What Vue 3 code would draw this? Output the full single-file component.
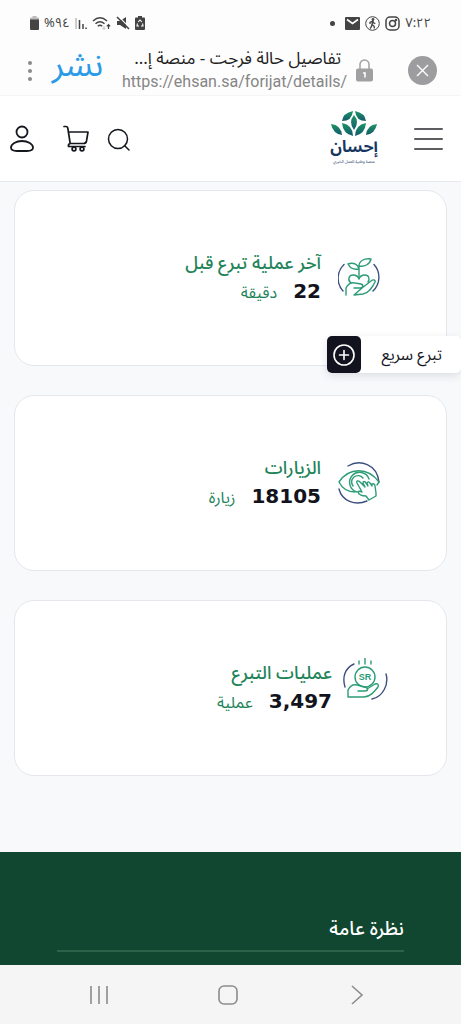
<script setup>
const stats = [
    {id: 'last', title: 'آخر عملية تبرع قبل', value: '22', unit: 'دقيقة'},
    {id: 'visits', title: 'الزيارات', value: '18105', unit: 'زيارة'},
    {id: 'donations', title: 'عمليات التبرع', value: '3,497', unit: 'عملية'},
]
</script>

<template>
    <div class="screen" dir="rtl" lang="ar">
        <div class="status">
            <div class="status__group">
                <span class="status__time">٧:٢٢</span>
                <svg width="15" height="15" viewBox="0 0 15 15" fill="none" stroke="#444" stroke-width="1.5">
                    <rect x="1" y="1" width="13" height="13" rx="4"/>
                    <circle cx="7.5" cy="7.5" r="3"/>
                    <circle cx="11" cy="4" r=".5"/>
                </svg>
                <svg width="15" height="15" viewBox="0 0 15 15" fill="none" stroke="#444" stroke-width="1">
                    <circle cx="7.5" cy="7.5" r="6.8"/>
                    <circle cx="8" cy="3.4" r="1" fill="#444"/>
                    <path d="M7.8 5 7 8.5 9 10l.5 2.5M7 8.5 6.5 10.5 5 12.5M5 8V6.5L7.8 5 8.8 7l1.5.7" stroke-width="1.3"/>
                </svg>
                <svg width="15" height="13" viewBox="0 0 15 13">
                    <rect width="15" height="13" rx="1" fill="#444"/>
                    <path d="m2 2.5 5.5 4 5.5-4" fill="none" stroke="#fff" stroke-width="1.6"/>
                </svg>
                <span class="status__dot"></span>
            </div>
            <div class="status__group">
                <svg width="10" height="14" viewBox="0 0 10 14">
                    <path d="M3 0h4v1.5h2q1 0 1 1V13q0 1-1 1H1q-1 0-1-1V2.5q0-1 1-1h2z" fill="#444"/>
                    <path d="m3.2 6 1.8-2 1.8 2M7.6 7.5 8 10H6M4 10H2l.4-2.5" fill="none" stroke="#fff" stroke-width="1.1"/>
                </svg>
                <svg width="14" height="14" viewBox="0 0 14 14">
                    <path d="M1 5h3l6-4v12L4 9H1z" fill="#444"/>
                    <path d="m2 0 12 12" stroke="#fdfdfd" stroke-width="1.2"/>
                    <path d="m1 1 12 12" fill="none" stroke="#444" stroke-width="1.6"/>
                </svg>
                <svg width="19" height="14" viewBox="0 0 19 14" fill="none" stroke="#444" stroke-width="1.5">
                    <path d="M1 5q7-6.5 14 0M3.5 7.8q4.5-4 9 0M5.8 10.3q2.2-2 4.4 0"/>
                    <path d="m12 10v3m-1.5-1 1.5 1.5 1.5-1.5" stroke="#bbb" stroke-width="1"/>
                    <path d="M16.5 13V8.5m-1.7 1.8 1.7-1.8 1.7 1.8" stroke-width="1.2"/>
                </svg>
                <svg width="12" height="14" viewBox="0 0 12 14" fill="none" stroke="#444" stroke-width="1.5">
                    <path d="M1 2v11" stroke="#bbb"/>
                    <path d="M4.5 4v9M8 8v5M11 11.5V13"/>
                </svg>
                <span class="status__battery">٩٤%</span>
                <svg width="9" height="14" viewBox="0 0 9 14">
                    <path d="M2.5 0h4v1.5H8q1 0 1 1V4H0V2.5q0-1 1-1h1.5z" fill="#bbb"/>
                    <path d="M0 3.5h9V13q0 1-1 1H1q-1 0-1-1z" fill="#444"/>
                </svg>
            </div>
        </div>

        <div class="browser">
            <button class="browser__close" aria-label="إغلاق">
                <svg width="13" height="13" viewBox="0 0 13 13" stroke="#fff" stroke-width="1.4">
                    <path d="m1 1 11 11M12 1 1 12"/>
                </svg>
            </button>
            <svg class="browser__lock" width="17" height="23" viewBox="0 0 17 23">
                <path d="M4 10V5.5a4.5 4.5 0 0 1 9 0V10" fill="none" stroke="#a0a0a2" stroke-width="1.5"/>
                <rect y="9.5" width="17" height="13" rx="2" fill="#a0a0a2"/>
                <path d="M7 14h2v4.5" fill="none" stroke="#fff" stroke-width="1.6"/>
            </svg>
            <div class="browser__page">
                <div class="browser__title">تفاصيل حالة فرجت - منصة إ...</div>
                <div class="browser__url" dir="ltr">https://ehsan.sa/forijat/details/</div>
            </div>
            <span class="browser__mark">نشر</span>
            <button class="browser__more" aria-label="المزيد">
                <i></i><i></i><i></i>
            </button>
        </div>

        <header class="header">
            <button class="header__menu" aria-label="القائمة">
                <svg width="29" height="23" viewBox="0 0 29 23" stroke="#5c5d61" stroke-width="2" stroke-linecap="round">
                    <path d="M1 2h27M1 12h27M1 22h27"/>
                </svg>
            </button>
            <a href="#" class="logo">
                <svg width="46" height="25" viewBox="0 0 46 25">
                    <defs>
                        <linearGradient id="leaf" x1="0" y1="0" x2="0" y2="1">
                            <stop offset="0" stop-color="#1d9566"/>
                            <stop offset="1" stop-color="#125a6b"/>
                        </linearGradient>
                    </defs>
                    <g fill="url(#leaf)">
                        <path d="M22 0Q12 2 11 10 21 10 22 0z"/>
                        <path d="M24 0q10 2 11 10Q25 10 24 0z"/>
                        <path d="M23 4q6 7 0 15-6-8 0-15z"/>
                        <path d="M11 12q11 2 11 13Q12 23 11 12z"/>
                        <path d="M35 12q-11 2-11 13 10-2 11-13z"/>
                        <path d="M0 13q10 1 11 11Q2 23 0 13z"/>
                        <path d="M46 13q-10 1-11 11 9-1 11-11z"/>
                    </g>
                </svg>
                <span class="logo__name">إحسان</span>
                <span class="logo__tagline">منصة وطنية للعمل الخيري</span>
            </a>
            <nav class="header__tools">
                <button aria-label="بحث">
                    <svg width="24" height="24" viewBox="0 0 24 24" fill="none" stroke="#15171f" stroke-width="1.5" stroke-linecap="round">
                        <circle cx="11" cy="12" r="9.5"/>
                        <path d="m17.5 18.5 4.5 4.5"/>
                    </svg>
                </button>
                <button class="header__cart" aria-label="السلة">
                    <svg width="26" height="27" viewBox="0 0 26 27" fill="none" stroke="#15171f" stroke-width="1.7" stroke-linecap="round" stroke-linejoin="round">
                        <path d="M1 1.5h2q1.5 0 1.8 1.5l2.4 15.5M5.3 7H25l-1.5 9q-.5 2.5-3 2.5H7.2q-2.2.5-1.7 3H22"/>
                        <circle cx="11" cy="24" r="1.9"/>
                        <circle cx="19" cy="24" r="1.9"/>
                    </svg>
                </button>
                <button aria-label="الحساب">
                    <svg width="24" height="27" viewBox="0 0 24 27" fill="none" stroke="#15171f" stroke-width="1.8">
                        <circle cx="12" cy="7" r="5.5"/>
                        <path d="M12 16c-6 0-11 3-11 6.500C1 25 4 26 7 26h10c3 0 6-1 6-3.500C23 19 18 16 12 16z"/>
                    </svg>
                </button>
            </nav>
        </header>

        <main class="main">
            <section v-for="stat in stats" :key="stat.id" class="card" :class="`card--${stat.id}`">
                <svg v-if="stat.id === 'last'" class="card__icon" width="42" height="42" viewBox="0 0 42 42">
                    <g stroke="#3c4f80">
                        <path d="M6 7.5A19 19 0 0 0 5 34M36 7.5A19 19 0 0 1 35 34"/>
                    </g>
                    <path d="M21 21V9M21 12c-5 1-9-1-11-5 5-2 10 0 11 5zM21 9c0-5 5-8 12-7-1 5-6 8-12 7z"/>
                    <path d="M13 26c-4-3-2-8 2-8 3 0 5 1 6 4 1-3 3-4 6-4 4 0 5 4 3 7"/>
                    <path d="M8 38v-7c2-4 5-6 9-5l6 1c3 1 2 4-1 4h-6M24 31l9-7c2-2 5-1 4 1-3 6-6 11-12 12l-9 1z"/>
                </svg>
                <svg v-else-if="stat.id === 'visits'" class="card__icon" width="42" height="42" viewBox="0 0 42 42">
                    <g stroke="#3c4f80">
                        <path d="M10 4C22-3 39 2 41 20M1 27c3 12 16 17 28 12"/>
                    </g>
                    <path d="M17 30C10 30 4 26 1 20 11 5 30 5 41 20l-2 3"/>
                    <path d="M19 30a10 10 0 1 1 12-13M15 24a6 6 0 1 1 10-8"/>
                    <path d="m24 30-5-9c-1-2 1-3 3-1l5 5-2-4c0-2 2-2 3 0l2 3-1-3c1-2 2-1 3 0l2 3v-2c2-1 3 1 3 2l1 7v3l-7 4-3-4c-3 0-7-1-8-4 0-1 2-1 4 0"/>
                </svg>
                <svg v-else class="card__icon" width="46" height="42" viewBox="0 0 46 42">
                    <g stroke="#3c4f80">
                        <path d="M12 6C3 10 0 19 3 29M44 16c3 10-3 23-14 25"/>
                    </g>
                    <path d="M17 3v3M23 0v6M29 3v3"/>
                    <circle cx="23" cy="19" r="10"/>
                    <text x="23" y="22">SR</text>
                    <path d="M6 39V32c2-4 5-6 9-5l8 2c4 1 3 4 0 4h-9M26 32l7-6c3-1 4 1 3 3-3 5-6 8-11 9l-3 1z" stroke="none"/>
                    <path d="M16 33h7c3 0 4-3 0-4l-8-2c-4-1-7 1-9 5v7h16c6 0 10-5 14-10 1-2 0-4-3-3l-8 5"/>
                </svg>
                <div class="card__text">
                    <h2 class="card__title">{{ stat.title }}</h2>
                    <p class="card__line">
                        <strong class="card__value">{{ stat.value }}</strong>
                        <span class="card__unit">{{ stat.unit }}</span>
                    </p>
                </div>
            </section>

            <button class="quick">
                <span class="quick__label">تبرع سريع</span>
                <span class="quick__icon">
                    <svg width="22" height="22" viewBox="0 0 22 22" fill="none" stroke="#fff" stroke-width="1.6" stroke-linecap="round">
                        <circle cx="11" cy="11" r="10"/>
                        <path d="M11 6.5v9M6.5 11h9"/>
                    </svg>
                </span>
            </button>
        </main>

        <footer class="footer">
            <h3 class="footer__title">نظرة عامة</h3>
        </footer>

        <nav class="keys">
            <button aria-label="رجوع">
                <svg width="20" height="20" viewBox="0 0 20 20"><path d="m5 1 10 9-10 9"/></svg>
            </button>
            <button aria-label="الرئيسية">
                <svg width="20" height="20" viewBox="0 0 20 20"><rect x="1" y="1" width="18" height="18" rx="5"/></svg>
            </button>
            <button aria-label="التطبيقات">
                <svg width="20" height="20" viewBox="0 0 20 20"><path d="M2 1v18M10 1v18M18 1v18"/></svg>
            </button>
        </nav>
    </div>
</template>

<style>
body {
    margin: 0;
    background: #f8f9fb;
}
</style>

<style scoped>
.screen {
    display: flex;
    flex-direction: column;
    min-height: 100vh;
    font-family: "Noto Sans Arabic", "DejaVu Sans", sans-serif;
    color: #15171f;
}

button {
    display: flex;
    padding: 0;
    border: 0;
    background: none;
    font: inherit;
    color: inherit;
}

h2, h3, p {
    margin: 0;
    font-weight: normal;
}

.status {
    display: flex;
    justify-content: space-between;
    align-items: center;
    height: 46px;
    padding: 0 30px;
    background: #fdfdfd;
    color: #444;
    font-size: 13px;
}

.status__group {
    display: flex;
    align-items: center;
    gap: 5px;
}

.status__dot {
    width: 5px;
    height: 5px;
    margin-right: 5px;
    border-radius: 50%;
    background: #444;
}

.browser {
    display: flex;
    align-items: center;
    height: 50px;
    padding: 0 24px 0 28px;
    background: #fdfdfd;
    border-bottom: 1px solid #f5f5f7;
    box-sizing: border-box;
}

.browser__close {
    width: 29px;
    height: 29px;
    border-radius: 50%;
    background: #9d9d9f;
    align-items: center;
    justify-content: center;
}

.browser__lock {
    margin: 0 35px 0 15px;
}

.browser__page {
    flex: 1;
    min-width: 0;
    padding-bottom: 4px;
}

.browser__title {
    font-size: 17px;
    line-height: 26px;
    white-space: nowrap;
    color: #222;
}

.browser__url {
    font-family: Roboto, sans-serif;
    font-size: 16px;
    line-height: 20px;
    white-space: nowrap;
    color: #858585;
}

.browser__mark {
    min-width: 55px;
    margin: 0 17px 0 18px;
    padding-bottom: 12px;
    font-size: 34px;
    line-height: 36px;
    text-align: center;
    color: #2a9be6;
}

.browser__more {
    flex-direction: column;
    gap: 4px;
}

.browser__more i {
    width: 4px;
    height: 4px;
    border-radius: 50%;
    background: #8a8a8a;
}

.header {
    display: flex;
    align-items: center;
    height: 86px;
    padding: 0 18px 0 10px;
    background: #fff;
    border-bottom: 1px solid #e6e8ee;
    box-sizing: border-box;
}

.logo {
    display: flex;
    flex-direction: column;
    align-items: center;
    width: 48px;
    margin-right: 36px;
    color: #17365f;
    text-decoration: none;
}

.logo__name {
    font-size: 16px;
    font-weight: bold;
    line-height: 22px;
}

.logo__tagline {
    font-size: 4px;
    line-height: 8px;
    white-space: nowrap;
}

.header__tools {
    display: flex;
    align-items: center;
    margin-right: auto;
}

.header__cart {
    margin: 0 18px 0 29px;
}

.main {
    position: relative;
    display: flex;
    flex-direction: column;
    gap: 29px;
    padding: 8px 14px 76px;
}

.card {
    display: flex;
    align-items: center;
    gap: 17px;
    min-height: 176px;
    padding: 0 66px;
    border: 1px solid #e4e7ec;
    border-radius: 20px;
    background: #fff;
    box-sizing: border-box;
}

.card--donations {
    gap: 10px;
    padding: 0 58px;
}

.card__icon {
    flex: none;
    fill: none;
    stroke: #2c9c76;
    stroke-width: 1.4;
    stroke-linecap: round;
    stroke-linejoin: round;
}

.card--donations .card__icon {
    margin-bottom: 18px;
}

.card__icon text {
    fill: #2c9c76;
    stroke: none;
    font-family: "Liberation Sans", sans-serif;
    font-size: 9px;
    font-weight: bold;
    text-anchor: middle;
}

.card__title {
    font-size: 18px;
    font-weight: 500;
    line-height: 28px;
    color: #218358;
}

.card__line {
    display: flex;
    align-items: baseline;
    gap: 16px;
    line-height: 28px;
}

.card__value {
    font-family: "DejaVu Sans", sans-serif;
    font-size: 20px;
    color: #12131d;
}

.card__unit {
    font-size: 16px;
    color: #218358;
}

.quick {
    position: absolute;
    top: 154px;
    left: 327px;
    right: 0;
    align-items: center;
    justify-content: space-between;
    padding-right: 19px;
    border-radius: 5px;
    background: #fff;
    box-shadow: 0 3px 8px rgba(20, 30, 60, .12);
}

.quick__label {
    font-size: 16px;
    white-space: nowrap;
}

.quick__icon {
    display: flex;
    align-items: center;
    justify-content: center;
    width: 34px;
    height: 37px;
    border-radius: 5px;
    background: #12131f;
}

.footer {
    flex: 1;
    padding: 62px 57px 0;
    background: #114630;
}

.footer__title {
    padding-bottom: 6px;
    border-bottom: 2px solid #2b6248;
    font-size: 19px;
    font-weight: 500;
    line-height: 30px;
    color: #fff;
}

.keys {
    display: flex;
    justify-content: space-between;
    align-items: center;
    height: 59px;
    padding: 0 94px 0 89px;
    background: #f5f5f5;
}

.keys svg {
    fill: none;
    stroke: #8c8c8c;
    stroke-width: 1.6;
}
</style>
